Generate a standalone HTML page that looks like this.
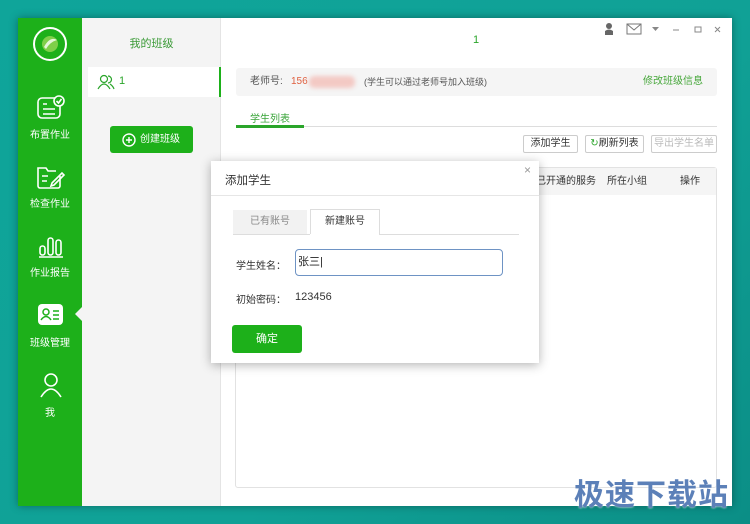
<!DOCTYPE html>
<html><head><meta charset="utf-8"><style>
*{margin:0;padding:0;box-sizing:border-box}
body{width:750px;height:524px;overflow:hidden;background:linear-gradient(135deg,#0fa59a,#10a196 60%,#0b8e86);font-family:"Liberation Sans","Noto Sans CJK SC",sans-serif;position:relative}
.a{position:absolute}
.win{left:18px;top:18px;width:714px;height:488px;background:#fff;box-shadow:0 0 8px rgba(0,0,0,.35)}
.side{left:18px;top:18px;width:64px;height:488px;background:#1db01a}
.nav{position:absolute;left:0;width:64px;text-align:center;color:#fff;font-size:10px}
.mid{left:82px;top:18px;width:139px;height:488px;background:#f4f4f4;border-right:1px solid #e4e4e4}
.btn{border:1px solid #ccc;border-radius:2px;font-size:10px;color:#333;background:#fff;text-align:center;line-height:16px;height:18px}
</style></head><body>
<div class="a win"></div>
<div class="a side">
 <svg class="a" style="left:14px;top:8px" width="36" height="36"><circle cx="18" cy="18" r="16" fill="none" stroke="#fff" stroke-width="2"/><circle cx="18" cy="18" r="8" fill="#7fcf4a"/><path d="M12 21 Q18 10 25 14 Q18 16 14 23Z" fill="#fff" opacity=".8"/></svg>
 <svg class="a" style="left:18px;top:76px" width="30" height="28" fill="none" stroke="#fff" stroke-width="1.6"><rect x="2" y="4" width="22" height="20" rx="4"/><path d="M7 10h4M7 15h12M7 20h12"/><circle cx="23" cy="7" r="5" fill="#1db01a"/><path d="M20.5 7l2 2 3-4"/></svg>
 <div class="nav" style="top:108px">布置作业</div>
 <svg class="a" style="left:18px;top:146px" width="30" height="28" fill="none" stroke="#fff" stroke-width="1.6"><path d="M24 12v10a2 2 0 0 1-2 2H4a2 2 0 0 1-2-2V4h8l2 3h8"/><path d="M6 12h6M6 17h5"/><path d="M16 19l10-10 2 2-10 10-3 1z"/></svg>
 <div class="nav" style="top:177px">检查作业</div>
 <svg class="a" style="left:20px;top:216px" width="26" height="24" fill="none" stroke="#fff" stroke-width="1.6"><rect x="2" y="12" width="5" height="9" rx="2.5"/><rect x="10" y="4" width="5" height="17" rx="2.5"/><rect x="18" y="6" width="5" height="15" rx="2.5"/><path d="M1 23h24"/></svg>
 <div class="nav" style="top:246px">作业报告</div>
 <svg class="a" style="left:20px;top:286px" width="26" height="22"><rect x="0" y="0" width="25" height="21" rx="4" fill="#fff"/><circle cx="8" cy="8" r="3" fill="none" stroke="#1db01a" stroke-width="1.5"/><path d="M3 16q5-7 10 0M15 7h6M15 11h6M15 15h6" fill="none" stroke="#1db01a" stroke-width="1.5"/></svg>
 <div class="nav" style="top:316px">班级管理</div>
 <svg class="a" style="left:21px;top:354px" width="24" height="26" fill="none" stroke="#fff" stroke-width="1.6"><circle cx="12" cy="8" r="6"/><path d="M2 25q10-16 20 0"/></svg>
 <div class="nav" style="top:386px">我</div>
 <div class="a" style="left:57px;top:289px;border:7px solid transparent;border-right-color:#f4f4f4;border-left:0"></div>
</div>
<div class="a mid">
 <div class="a" style="left:0;top:17px;width:139px;text-align:center;font-size:11px;color:#3a9a36">我的班级</div>
 <div class="a" style="left:6px;top:49px;width:133px;height:30px;background:#fff;border-right:2px solid #1db01a"></div>
 <svg class="a" style="left:15px;top:56px" width="18" height="16" fill="none" stroke="#2aa52a" stroke-width="1.2"><circle cx="7" cy="5" r="3.5"/><path d="M1 15q6-10 12 0M11 2a3.5 3.5 0 0 1 0 7M13 10q3 2 4 5"/></svg>
 <div class="a" style="left:37px;top:57px;font-size:11px;color:#2aa52a">1</div>
 <div class="a" style="left:28px;top:108px;width:83px;height:27px;background:#1db01a;border-radius:3px;color:#fff;font-size:10px;line-height:27px;padding-left:30px">创建班级</div>
 <svg class="a" style="left:40px;top:115px" width="14" height="14" fill="none" stroke="#fff" stroke-width="1.4"><circle cx="7" cy="7" r="6"/><path d="M7 4v6M4 7h6"/></svg>
</div>
<div class="a" style="left:473px;top:34px;font-size:11px;color:#2aa52a">1</div>
<svg class="a" style="left:600px;top:21px" width="130" height="16"><path d="M5 10q4-3 8 0v4H5z" fill="#666"/><circle cx="9" cy="5" r="3" fill="#666"/><rect x="27" y="3" width="14" height="10" fill="none" stroke="#777"/><path d="M27 3l7 6 7-6" fill="none" stroke="#777"/><path d="M52 6h7l-3.5 4z" fill="#888"/><path d="M73 9h6" stroke="#888"/><rect x="95" y="6" width="6" height="5" fill="none" stroke="#888"/><path d="M115 6l5 5M120 6l-5 5" stroke="#888"/></svg>
<div class="a" style="left:236px;top:68px;width:481px;height:28px;background:#f5f5f5;border-radius:3px;font-size:10px;line-height:28px">
 <span class="a" style="left:14px;color:#555">老师号:</span>
 <span class="a" style="left:55px;color:#e06040">156</span>
 <span class="a" style="left:73px;top:8px;width:46px;height:12px;background:#f3c9c4;border-radius:5px;filter:blur(2px)"></span>
 <span class="a" style="left:128px;color:#555;font-size:9px">(学生可以通过老师号加入班级)</span>
 <span class="a" style="right:14px;color:#48a83c">修改班级信息</span>
</div>
<div class="a" style="left:250px;top:110px;font-size:10px;color:#3aa53a">学生列表</div>
<div class="a" style="left:236px;top:126px;width:481px;height:1px;background:#ddd"></div>
<div class="a" style="left:236px;top:125px;width:68px;height:3px;background:#2aa52a"></div>
<div class="a btn" style="left:523px;top:135px;width:55px">添加学生</div>
<div class="a btn" style="left:585px;top:135px;width:59px"><span style="color:#2aa52a">↻</span>刷新列表</div>
<div class="a btn" style="left:651px;top:135px;width:66px;color:#bbb">导出学生名单</div>
<div class="a" style="left:235px;top:167px;width:482px;height:321px;border:1px solid #e2e2e2;border-radius:3px"></div>
<div class="a" style="left:236px;top:168px;width:480px;height:27px;background:#f5f5f5;font-size:10px;color:#333;line-height:27px">
 <span class="a" style="left:300px">已开通的服务</span><span class="a" style="left:371px">所在小组</span><span class="a" style="left:444px">操作</span>
</div>
<div class="a" style="left:211px;top:161px;width:328px;height:202px;background:#fff;box-shadow:0 2px 10px rgba(0,0,0,.3)">
 <div class="a" style="left:14px;top:11px;font-size:11.5px;color:#333">添加学生</div>
 <div class="a" style="left:313px;top:2px;font-size:12px;color:#999">×</div>
 <div class="a" style="left:0;top:34px;width:328px;height:1px;background:#e6e6e6"></div>
 <div class="a" style="left:22px;top:49px;width:74px;height:24px;background:#f2f2f2;font-size:10px;color:#888;text-align:center;line-height:24px">已有账号</div>
 <div class="a" style="left:99px;top:48px;width:70px;height:26px;background:#fff;border:1px solid #ddd;border-bottom:none;font-size:10px;color:#333;text-align:center;line-height:24px">新建账号</div>
 <div class="a" style="left:22px;top:73px;width:286px;height:1px;background:#ddd"></div>
 <div class="a" style="left:99px;top:73px;width:69px;height:1px;background:#fff"></div>
 <div class="a" style="left:25px;top:96px;font-size:10px;color:#333">学生姓名：</div>
 <div class="a" style="left:84px;top:88px;width:208px;height:27px;border:1.5px solid #6e93c4;border-radius:4px;font-size:11px;line-height:24px;padding-left:2px;color:#222">张三|</div>
 <div class="a" style="left:25px;top:130px;font-size:10px;color:#333">初始密码：</div>
 <div class="a" style="left:84px;top:130px;font-size:11px;color:#333">123456</div>
 <div class="a" style="left:21px;top:164px;width:70px;height:28px;background:#1db01a;border-radius:3px;color:#fff;font-size:11px;text-align:center;line-height:28px">确定</div>
</div>
<div class="a" style="left:574px;top:470px;font-size:30px;font-weight:bold;color:#5c80b8;letter-spacing:1px;text-shadow:0 0 2px #fff;font-family:'Noto Sans CJK SC',sans-serif">极速下载站</div>
</body></html>
